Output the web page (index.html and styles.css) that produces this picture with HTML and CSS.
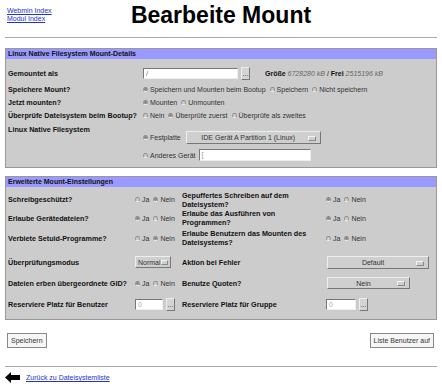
FILE: index.html
```html
<!DOCTYPE html>
<html lang="de">
<head>
    <meta charset="UTF-8">
    <title>Bearbeite Mount</title>
    <link rel="stylesheet" href="styles.css">
</head>
<body>
    <div class="header">
        <div class="links">
            <a href="#">Webmin Index</a><br>
            <a href="#">Modul Index</a>
        </div>
        <h1>Bearbeite Mount</h1>
        <div></div>
    </div>
    <hr>

    <div class="box">
        <div class="box-title">Linux Native Filesystem Mount-Details</div>
        <div class="box-body details">
            <div class="label">Gemountet als</div>
            <div class="value">
                <span class="input mount-input">/</span>
                <span class="dots">...</span>
                <span class="size"><b>Größe</b> <i>6728280 kB</i> / <b>Frei</b> <i>2515196 kB</i></span>
            </div>

            <div class="label">Speichere Mount?</div>
            <div class="value">
                <span class="radio checked"></span>Speichern und Mounten beim Bootup
                <span class="radio"></span>Speichern
                <span class="radio"></span>Nicht speichern
            </div>

            <div class="label">Jetzt mounten?</div>
            <div class="value">
                <span class="radio checked"></span>Mounten
                <span class="radio"></span>Unmounten
            </div>

            <div class="label">Überprüfe Dateisystem beim Bootup?</div>
            <div class="value">
                <span class="radio"></span>Nein
                <span class="radio checked"></span>Überprüfe zuerst
                <span class="radio"></span>Überprüfe als zweites
            </div>

            <div class="label top">Linux Native Filesystem</div>
            <div class="device">
                <div class="value">
                    <span class="radio checked"></span>Festplatte
                    <span class="select device-select">IDE Gerät A Partition 1 (Linux)</span>
                </div>
                <div class="value">
                    <span class="radio"></span>Anderes Gerät
                    <span class="input other-input">[</span>
                </div>
            </div>
        </div>
    </div>

    <div class="box second">
        <div class="box-title">Erweiterte Mount-Einstellungen</div>
        <div class="box-body options">
            <div class="label">Schreibgeschützt?</div>
            <div class="value"><span class="radio"></span>Ja <span class="radio checked"></span>Nein</div>
            <div class="label">Gepuffertes Schreiben auf dem<br>Dateisystem?</div>
            <div class="value"><span class="radio checked"></span>Ja <span class="radio"></span>Nein</div>

            <div class="label">Erlaube Gerätedateien?</div>
            <div class="value"><span class="radio checked"></span>Ja <span class="radio"></span>Nein</div>
            <div class="label">Erlaube das Ausführen von<br>Programmen?</div>
            <div class="value"><span class="radio checked"></span>Ja <span class="radio"></span>Nein</div>

            <div class="label">Verbiete Setuid-Programme?</div>
            <div class="value"><span class="radio"></span>Ja <span class="radio checked"></span>Nein</div>
            <div class="label">Erlaube Benutzern das Mounten des<br>Dateisystems?</div>
            <div class="value"><span class="radio"></span>Ja <span class="radio checked"></span>Nein</div>

            <div class="label">Überprüfungsmodus</div>
            <div class="value"><span class="select mode-select">Normal</span></div>
            <div class="label">Aktion bei Fehler</div>
            <div class="value"><span class="select error-select">Default</span></div>

            <div class="label">Dateien erben übergeordnete GID?</div>
            <div class="value"><span class="radio checked"></span>Ja <span class="radio"></span>Nein</div>
            <div class="label">Benutze Quoten?</div>
            <div class="value"><span class="select quota-select">Nein</span></div>

            <div class="label">Reserviere Platz für Benutzer</div>
            <div class="value"><span class="input small-input">0</span><span class="dots">...</span></div>
            <div class="label">Reserviere Platz für Gruppe</div>
            <div class="value"><span class="input small-input group">0</span><span class="dots">...</span></div>
        </div>
    </div>

    <div class="actions">
        <button class="btn">Speichern</button>
        <button class="btn">Liste Benutzer auf</button>
    </div>
    <hr class="bottom">

    <div class="footer">
        <svg class="arrow" width="15" height="11" viewBox="0 0 15 11">
            <polygon points="0,5.5 6,0 6,3 15,3 15,8 6,8 6,11" fill="#000"/>
        </svg>
        <a href="#">Zurück zu Dateisystemliste</a>
    </div>
</body>
</html>
```

FILE: styles.css
```css
* {
    margin: 0;
    padding: 0;
    box-sizing: border-box;
}

body {
    font-family: "Liberation Sans", Arial, sans-serif;
    font-size: 7px;
    line-height: 9px;
    color: #333;
    background: #fff;
    padding: 0 5px;
}

a {
    color: #2233cc;
}

/* Page header */
.header {
    display: grid;
    grid-template-columns: 1fr auto 1fr;
    height: 37px;
}

.links {
    padding: 7px 0 0 2px;
    line-height: 7.5px;
}

h1 {
    font-size: 23px;
    line-height: 26px;
    margin-top: 2px;
    color: #000;
}

hr {
    border: 0;
    border-top: 1px solid #aaa;
}

/* Boxes */
.box {
    margin-top: 10px;
    border: 1px solid #999;
}

.box.second {
    margin-top: 8px;
}

.box-title {
    background: #9999ff;
    height: 10px;
    line-height: 10px;
    padding-left: 2px;
    font-weight: bold;
    color: #111;
}

.box-body {
    background: #cccccc;
}

.label {
    font-weight: bold;
    font-size: 7.2px;
    color: #111;
    white-space: nowrap;
}

.label.top {
    align-self: start;
    padding-top: 3px;
}

.value {
    display: flex;
    align-items: center;
    white-space: nowrap;
}

.details {
    display: grid;
    grid-template-columns: 135px 1fr;
    grid-template-rows: 19px 13px 13px 13px auto;
    align-items: center;
    padding: 5px 0 5px 2px;
}

.device {
    display: flex;
    flex-direction: column;
    gap: 2px;
    padding-top: 7px;
}

.device .value:first-child {
    height: 17px;
}

.device .value:last-child {
    height: 14px;
}

.options {
    display: grid;
    grid-template-columns: 127px 47px 144px 1fr;
    grid-template-rows: 17px 20px 20px 28px 14px 29px;
    align-items: center;
    padding: 4px 0 0 2px;
}

/* Form widgets */
.radio {
    display: inline-block;
    width: 5px;
    height: 5px;
    border-radius: 50%;
    border: 1px solid #999;
    border-top-color: #888;
    border-bottom-color: #eee;
    margin: 0 2px 0 0;
}

.radio.checked {
    background: radial-gradient(circle, #888 0 1.3px, #bbb 1.6px);
}

.value .radio ~ .radio {
    margin-left: 4px;
}

.input {
    display: inline-block;
    height: 11px;
    line-height: 9px;
    padding-left: 2px;
    background: #fff;
    border: 1px solid;
    border-color: #777 #eee #eee #777;
    color: #555;
}

.mount-input {
    width: 95px;
}

.other-input {
    width: 112px;
    height: 12px;
    margin-left: 3px;
    color: #999;
}

.small-input {
    width: 28px;
    color: #aaa;
}

.small-input.group {
    width: 30px;
}

.dots {
    display: inline-block;
    width: 9px;
    height: 13px;
    line-height: 11px;
    text-align: center;
    margin-left: 3px;
    background: #d4d4d4;
    border: 1px solid;
    border-color: #eee #777 #777 #eee;
}

.size {
    margin-left: 15px;
    color: #111;
}

.size i {
    color: #666;
}

.select {
    display: inline-flex;
    align-items: center;
    justify-content: center;
    position: relative;
    height: 13px;
    padding-right: 10px;
    background: #cfcfcf;
    border: 1px solid;
    border-color: #eee #777 #777 #eee;
    color: #333;
}

.select::after {
    content: "";
    position: absolute;
    right: 4px;
    top: 4px;
    width: 6px;
    height: 3px;
    border: 1px solid;
    border-color: #f4f4f4 #888 #888 #f4f4f4;
}

.device-select {
    width: 135px;
    margin-left: 5px;
}

.mode-select {
    width: 36px;
    height: 12px;
    justify-content: flex-start;
    padding: 0 0 0 2px;
}

.mode-select::after {
    top: 3px;
    right: 2px;
    width: 5px;
}

.error-select {
    width: 102px;
    margin-left: 1px;
}

.quota-select {
    width: 83px;
    height: 12px;
    margin-left: 1px;
}

.quota-select::after {
    top: 3px;
}

/* Bottom */
.actions {
    display: flex;
    justify-content: space-between;
    margin-top: 13px;
    padding: 0 3px 0 2px;
}

.btn {
    height: 15px;
    padding: 0 3px;
    font-family: inherit;
    font-size: 7px;
    color: #333;
    background: #f6f6f6;
    border: 1px solid #888;
}

hr.bottom {
    margin-top: 18px;
}

.footer {
    display: flex;
    align-items: center;
    gap: 6px;
    margin-top: 5px;
}
```
